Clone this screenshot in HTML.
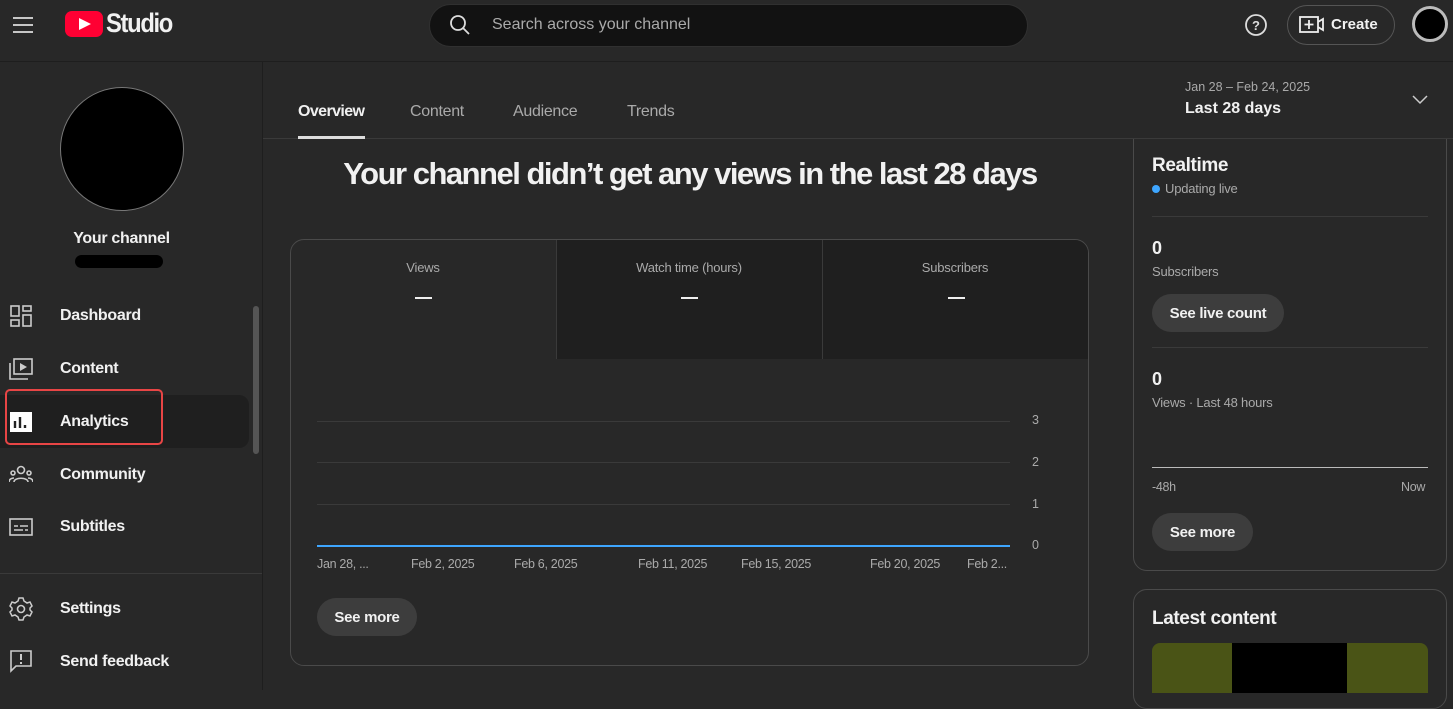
<!DOCTYPE html>
<html><head><meta charset="utf-8"><style>
*{box-sizing:border-box;margin:0;padding:0}
body{width:1453px;height:690px;overflow:hidden;background:#282828;font-family:"Liberation Sans",sans-serif;color:#f1f1f1;position:relative}
.a{position:absolute}
.nav{font-size:16px;font-weight:bold;letter-spacing:-0.3px}
.btn{position:absolute;background:#3d3d3d;border-radius:20px;height:38px;font-size:15px;font-weight:bold;display:flex;align-items:center;justify-content:center;letter-spacing:-0.3px}
.lbl{font-size:13px;color:#aaa;letter-spacing:-0.2px}
.ax{font-size:12.5px;color:#aaa;letter-spacing:-0.3px}
.grid{position:absolute;left:317px;width:693px;height:1px;background:#3a3a3a}
</style></head><body>
<!-- realtime (under tab header) -->
<div class="a" style="left:1133px;top:120px;width:314px;height:451px;border:1px solid #4a4a4a;border-radius:14px"></div>
<!-- tab header bg -->
<div class="a" style="left:263px;top:62px;width:1190px;height:77px;background:#282828;border-bottom:1px solid #3a3a3a"></div>
<!-- header -->
<div class="a" style="left:0;top:0;width:1453px;height:62px;border-bottom:1px solid #1e1e1e;background:#282828"></div>
<svg class="a" style="left:12px;top:15px" width="22" height="20"><path d="M1 3h20M1 10h20M1 17h20" stroke="#ddd" stroke-width="1.8"/></svg>
<div class="a" style="left:65px;top:11px;width:38px;height:26px;background:#ff0033;border-radius:7px"></div>
<svg class="a" style="left:78px;top:17px" width="14" height="14"><path d="M1 1L13 7L1 13Z" fill="#fff"/></svg>
<div class="a" style="left:106px;top:8px;font-size:27px;font-weight:bold;letter-spacing:-1.5px;transform:scaleX(.88);transform-origin:left">Studio</div>
<div class="a" style="left:429px;top:4px;width:599px;height:43px;background:#121212;border-radius:22px;border:1px solid #303030"></div>
<svg class="a" style="left:449px;top:14px" width="22" height="22"><circle cx="9" cy="9" r="7" stroke="#ddd" stroke-width="1.8" fill="none"/><path d="M14 14l6 6" stroke="#ddd" stroke-width="1.8"/></svg>
<div class="a" style="left:492px;top:16px;font-size:16px;color:#aaa">Search across your channel</div>
<svg class="a" style="left:1244px;top:13px" width="24" height="24"><circle cx="12" cy="12" r="10" stroke="#ddd" stroke-width="1.8" fill="none"/><text x="12" y="17" fill="#ddd" font-size="13" font-weight="bold" text-anchor="middle" font-family="Liberation Sans">?</text></svg>
<div class="a" style="left:1287px;top:5px;width:108px;height:40px;border:1px solid #555;border-radius:20px"></div>
<svg class="a" style="left:1299px;top:16px" width="26" height="18"><rect x="1" y="1" width="18" height="15" stroke="#eee" stroke-width="1.8" fill="none"/><path d="M10 4v9M5.5 8.5h9M19 6l5-3v11l-5-3" stroke="#eee" stroke-width="1.8" fill="none"/></svg>
<div class="a" style="left:1331px;top:16px;font-size:15px;font-weight:bold">Create</div>
<div class="a" style="left:1412px;top:6px;width:36px;height:36px;border-radius:50%;background:#000;border:3px solid #bbb"></div>
<!-- sidebar -->
<div class="a" style="left:262px;top:62px;width:1px;height:628px;background:#1e1e1e"></div>
<div class="a" style="left:60px;top:87px;width:124px;height:124px;border-radius:50%;background:#000;border:1px solid #777"></div>
<div class="a" style="left:0;width:243px;top:230px;text-align:center;font-size:16px;font-weight:bold;letter-spacing:-0.3px">Your channel</div>
<div class="a" style="left:75px;top:255px;width:88px;height:13px;border-radius:7px;background:#000"></div>
<div class="a" style="left:253px;top:306px;width:6px;height:148px;border-radius:3px;background:#555"></div>
<div class="a" style="left:0;top:395px;width:249px;height:53px;border-radius:0 10px 10px 0;background:#1f1f1f"></div>
<div class="a" style="left:5px;top:389px;width:158px;height:56px;border:2.5px solid #e84545;border-radius:5px"></div>
<svg class="a" style="left:10px;top:305px" width="22" height="22"><g stroke="#ccc" stroke-width="1.6" fill="none"><rect x="1" y="1" width="8" height="10"/><rect x="13" y="1" width="8" height="5"/><rect x="1" y="15" width="8" height="6"/><rect x="13" y="10" width="8" height="11"/></g></svg>
<div class="a nav" style="left:60px;top:307px">Dashboard</div>
<svg class="a" style="left:9px;top:358px" width="24" height="22"><g stroke="#ccc" stroke-width="1.6" fill="none"><rect x="5" y="1" width="18" height="15"/><path d="M1 5v16h18"/></g><path d="M11 5l7 4-7 4z" fill="#ccc"/></svg>
<div class="a nav" style="left:60px;top:360px">Content</div>
<svg class="a" style="left:10px;top:412px" width="22" height="20"><rect x="0" y="0" width="22" height="20" fill="#fff"/><path d="M5 9v7M10 5v11M15 13v3" stroke="#222" stroke-width="2.4"/></svg>
<div class="a nav" style="left:60px;top:413px">Analytics</div>
<svg class="a" style="left:9px;top:465px" width="24" height="18"><g stroke="#ccc" stroke-width="1.6" fill="none"><circle cx="12" cy="5" r="3.5"/><circle cx="4" cy="8" r="2"/><circle cx="20" cy="8" r="2"/><path d="M5 17c0-5 14-5 14 0M0 17c0-3 3-4 5-4M24 17c0-3-3-4-5-4"/></g></svg>
<div class="a nav" style="left:60px;top:466px">Community</div>
<svg class="a" style="left:9px;top:518px" width="24" height="18"><g stroke="#ccc" stroke-width="1.6" fill="none"><rect x="1" y="1" width="22" height="16"/><path d="M5 8h4M11 8h8M5 12h9M16 12h3"/></g></svg>
<div class="a nav" style="left:60px;top:518px">Subtitles</div>
<div class="a" style="left:0;top:573px;width:262px;height:1px;background:#3a3a3a"></div>
<svg class="a" style="left:9px;top:597px" width="24" height="24"><circle cx="12" cy="12" r="3.5" stroke="#ccc" stroke-width="1.6" fill="none"/><path d="M10 1h4l1 3 3 2 3-1 2 4-2 2v2l2 2-2 4-3-1-3 2-1 3h-4l-1-3-3-2-3 1-2-4 2-2v-2l-2-2 2-4 3 1 3-2z" stroke="#ccc" stroke-width="1.5" fill="none"/></svg>
<div class="a nav" style="left:60px;top:600px">Settings</div>
<svg class="a" style="left:10px;top:650px" width="22" height="24"><path d="M1 1h20v15H6l-5 5z" stroke="#ccc" stroke-width="1.6" fill="none"/><path d="M11 4v6M11 12v2" stroke="#ccc" stroke-width="2"/></svg>
<div class="a nav" style="left:60px;top:653px">Send feedback</div>
<!-- tabs -->
<div class="a nav" style="left:298px;top:103px;font-size:16px;letter-spacing:-0.6px">Overview</div>
<div class="a" style="left:298px;top:136px;width:67px;height:3px;background:#ddd"></div>
<div class="a nav" style="left:410px;top:103px;color:#aaa;font-weight:normal">Content</div>
<div class="a nav" style="left:513px;top:103px;color:#aaa;font-weight:normal">Audience</div>
<div class="a nav" style="left:627px;top:103px;color:#aaa;font-weight:normal">Trends</div>
<div class="a" style="left:1185px;top:80px;font-size:12.5px;color:#aaa">Jan 28 – Feb 24, 2025</div>
<div class="a" style="left:1185px;top:100px;font-size:16px;font-weight:bold">Last 28 days</div>
<svg class="a" style="left:1412px;top:95px" width="16" height="10"><path d="M1 1l7 7 7-7" stroke="#ccc" stroke-width="1.5" fill="none"/></svg>
<!-- title -->
<div class="a" style="left:290px;width:800px;top:156px;text-align:center;font-size:31px;font-weight:bold;letter-spacing:-1.5px">Your channel didn’t get any views in the last 28 days</div>
<!-- chart card -->
<div class="a" style="left:290px;top:239px;width:799px;height:427px;border:1px solid #4a4a4a;border-radius:14px;overflow:hidden">
 <div class="a" style="left:266px;top:0;width:533px;height:119px;background:#1f1f1f"></div>
 <div class="a" style="left:265px;top:0;width:1px;height:119px;background:#3a3a3a"></div>
 <div class="a" style="left:531px;top:0;width:1px;height:119px;background:#3a3a3a"></div>
</div>
<div class="a lbl" style="left:290px;width:266px;top:260px;text-align:center">Views</div>
<div class="a lbl" style="left:556px;width:266px;top:260px;text-align:center">Watch time (hours)</div>
<div class="a lbl" style="left:822px;width:266px;top:260px;text-align:center">Subscribers</div>
<div class="a" style="left:415px;top:297px;width:17px;height:2px;background:#eee"></div>
<div class="a" style="left:681px;top:297px;width:17px;height:2px;background:#eee"></div>
<div class="a" style="left:948px;top:297px;width:17px;height:2px;background:#eee"></div>
<div class="grid" style="top:421px"></div><div class="grid" style="top:462px"></div><div class="grid" style="top:504px"></div>
<div class="a" style="left:317px;top:545px;width:693px;height:2px;background:#3ea6ff"></div>
<div class="a ax" style="left:1032px;top:413px">3</div><div class="a ax" style="left:1032px;top:455px">2</div><div class="a ax" style="left:1032px;top:497px">1</div><div class="a ax" style="left:1032px;top:538px">0</div>
<div class="a ax" style="left:317px;top:557px">Jan 28, ...</div>
<div class="a ax" style="left:411px;top:557px">Feb 2, 2025</div>
<div class="a ax" style="left:514px;top:557px">Feb 6, 2025</div>
<div class="a ax" style="left:638px;top:557px">Feb 11, 2025</div>
<div class="a ax" style="left:741px;top:557px">Feb 15, 2025</div>
<div class="a ax" style="left:870px;top:557px">Feb 20, 2025</div>
<div class="a ax" style="left:967px;top:557px">Feb 2...</div>
<div class="btn" style="left:317px;top:598px;width:100px">See more</div>
<!-- realtime content -->
<div class="a" style="left:1152px;top:155px;font-size:19px;font-weight:bold;letter-spacing:-0.4px">Realtime</div>
<div class="a" style="left:1152px;top:185px;width:8px;height:8px;border-radius:50%;background:#3ea6ff"></div>
<div class="a lbl" style="left:1165px;top:181px">Updating live</div>
<div class="a" style="left:1152px;top:216px;width:276px;height:1px;background:#3a3a3a"></div>
<div class="a" style="left:1152px;top:238px;font-size:18px;font-weight:bold">0</div>
<div class="a lbl" style="left:1152px;top:264px">Subscribers</div>
<div class="btn" style="left:1152px;top:294px;width:132px">See live count</div>
<div class="a" style="left:1152px;top:347px;width:276px;height:1px;background:#3a3a3a"></div>
<div class="a" style="left:1152px;top:369px;font-size:18px;font-weight:bold">0</div>
<div class="a lbl" style="left:1152px;top:395px">Views · Last 48 hours</div>
<div class="a" style="left:1152px;top:467px;width:276px;height:1px;background:#bbb"></div>
<div class="a ax" style="left:1152px;top:480px">-48h</div>
<div class="a ax" style="left:1401px;top:480px">Now</div>
<div class="btn" style="left:1152px;top:513px;width:101px">See more</div>
<!-- latest -->
<div class="a" style="left:1133px;top:589px;width:314px;height:120px;border:1px solid #4a4a4a;border-radius:14px"></div>
<div class="a" style="left:1152px;top:608px;font-size:19px;font-weight:bold;letter-spacing:-0.4px">Latest content</div>
<div class="a" style="left:1152px;top:643px;width:276px;height:50px;border-radius:8px 8px 0 0;overflow:hidden;background:#4a5416">
 <div class="a" style="left:80px;top:0;width:115px;height:50px;background:#000"></div>
</div>
</body></html>
